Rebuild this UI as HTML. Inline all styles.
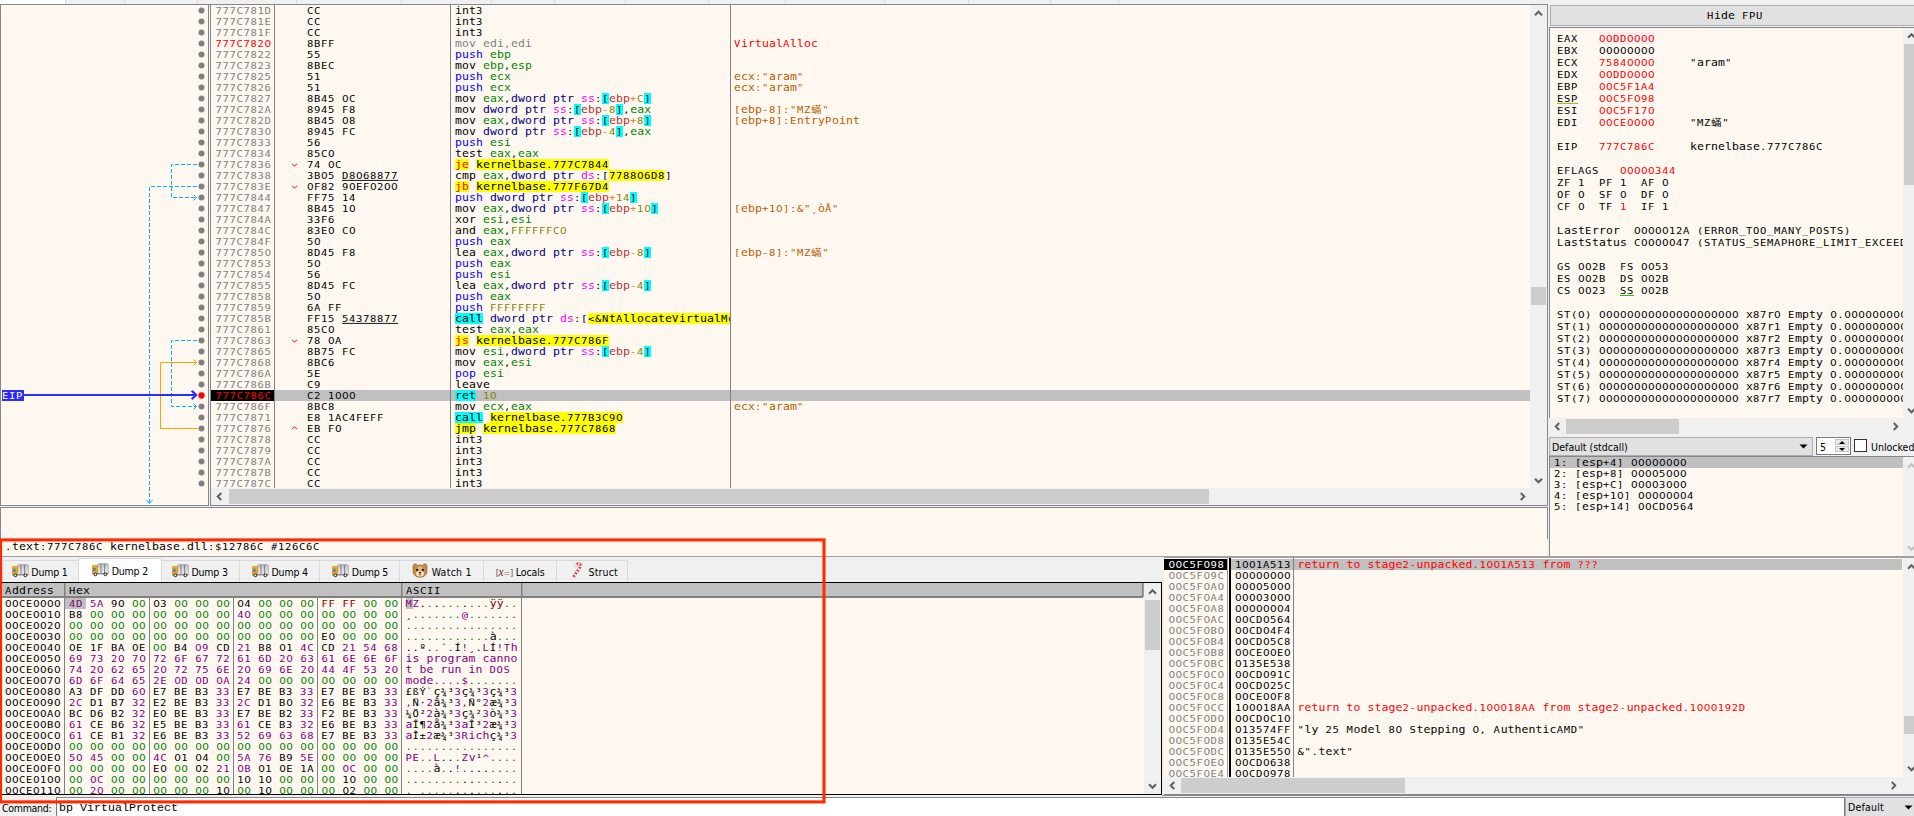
<!DOCTYPE html>
<html lang="en"><head><meta charset="utf-8"><title>x32dbg - stage2-unpacked</title>
<style>
*{box-sizing:border-box;margin:0;padding:0}
html,body{width:1914px;height:816px;overflow:hidden;background:#F0F0F0}
#root{position:relative;width:1914px;height:816px;overflow:hidden;background:#F0F0F0;font-family:"DejaVu Sans Condensed","Liberation Sans",sans-serif;font-size:10.5px;color:#000}
.a{position:absolute}
.m{font-family:"DejaVu Sans Mono","Noto Sans CJK TC",monospace;font-size:10.5px;letter-spacing:0.6785px;white-space:pre}
.r{position:absolute;height:11px;line-height:11px;white-space:pre}
.r i,.r12 i,.h11 i{font-style:normal;position:relative;top:-0.5px;display:inline-block;transform:scaleY(0.9);transform-origin:0 9.135px}
.r12 i{transform-origin:0 9.635px}
.h11{height:11px;line-height:11px}
.r b{font-weight:normal;display:inline-block;height:11px;vertical-align:top}
.r12{position:absolute;height:12px;line-height:12px;white-space:pre}
.view{position:absolute;background:#FFF8F0;overflow:hidden}
.gr{color:#808080}.rd{color:#FF0000}.bl{color:#0000FF}.rg{color:#008300}.nv{color:#000080}
.sg{color:#FF00FF}.mb{color:#B03434}.op{color:#F27711}.vl{color:#828200}
.cy{background:#00FFFF}.yl{background:#FFFF00}.cm{color:#B85C00}
.g0{color:#008000}.pp{color:#800080}.dr{color:#800000}
.u{text-decoration:underline;text-underline-offset:1px}
u{text-decoration:none;font-family:"DejaVu Sans",sans-serif;letter-spacing:0.3196px;line-height:0}
s{text-decoration:none;font-size:11.5px;letter-spacing:0.0764px;line-height:0}
.sb{position:absolute;background:#F0F0F0}
.th{position:absolute;background:#CDCDCD}
.ln{position:absolute;background:#828790}
.ut{font-family:"DejaVu Sans Condensed","Liberation Sans",sans-serif;font-size:10.5px;letter-spacing:0px;white-space:pre}
</style></head>
<body><div id="root">
<div class="a" style="left:0px;top:0px;width:1914px;height:4px;background:#F0F0F0;"></div>
<div class="a" style="left:0px;top:0px;width:65px;height:4px;background:#FFFFFF;"></div>
<div class="a" style="left:65px;top:0px;width:1px;height:4px;background:#D9D9D9;"></div>
<div class="a" style="left:124px;top:0px;width:1px;height:4px;background:#D9D9D9;"></div>
<div class="a" style="left:197px;top:0px;width:1px;height:4px;background:#D9D9D9;"></div>
<div class="a" style="left:296px;top:0px;width:1px;height:4px;background:#D9D9D9;"></div>
<div class="a" style="left:401px;top:0px;width:1px;height:4px;background:#D9D9D9;"></div>
<div class="a" style="left:491px;top:0px;width:1px;height:4px;background:#D9D9D9;"></div>
<div class="a" style="left:554px;top:0px;width:1px;height:4px;background:#D9D9D9;"></div>
<div class="a" style="left:625px;top:0px;width:1px;height:4px;background:#D9D9D9;"></div>
<div class="a" style="left:708px;top:0px;width:1px;height:4px;background:#D9D9D9;"></div>
<div class="a" style="left:785px;top:0px;width:1px;height:4px;background:#D9D9D9;"></div>
<div class="a" style="left:884px;top:0px;width:1px;height:4px;background:#D9D9D9;"></div>
<div class="a" style="left:968px;top:0px;width:1px;height:4px;background:#D9D9D9;"></div>
<div class="a" style="left:1050px;top:0px;width:1px;height:4px;background:#D9D9D9;"></div>
<div class="a" style="left:1118px;top:0px;width:1px;height:4px;background:#D9D9D9;"></div>
<div class="a" style="left:0px;top:4px;width:1548px;height:1px;background:#828790;"></div>
<div class="view" style="left:0;top:5px;width:209px;height:501px;border-left:1px solid #828790;border-right:1px solid #828790;border-bottom:1px solid #828790"></div>
<div class="view" style="left:210px;top:5px;width:1338px;height:501px;border-left:1px solid #828790;border-right:1px solid #828790;border-bottom:1px solid #828790"></div>
<div class="a" style="left:275px;top:390px;width:1255px;height:11px;background:#C0C0C0;"></div>
<div class="a" style="left:211px;top:390px;width:63px;height:11px;background:#000000;"></div>
<div class="a m" style="left:211px;top:5px;width:63px;height:484px;overflow:hidden"><div class="r gr" style="left:4.5px;top:0px"><i>777C781D</i></div><div class="r gr" style="left:4.5px;top:11px"><i>777C781E</i></div><div class="r gr" style="left:4.5px;top:22px"><i>777C781F</i></div><div class="r rd" style="left:4.5px;top:33px"><i>777C782<u>0</u></i></div><div class="r gr" style="left:4.5px;top:44px"><i>777C7822</i></div><div class="r gr" style="left:4.5px;top:55px"><i>777C7823</i></div><div class="r gr" style="left:4.5px;top:66px"><i>777C7825</i></div><div class="r gr" style="left:4.5px;top:77px"><i>777C7826</i></div><div class="r gr" style="left:4.5px;top:88px"><i>777C7827</i></div><div class="r gr" style="left:4.5px;top:99px"><i>777C782A</i></div><div class="r gr" style="left:4.5px;top:110px"><i>777C782D</i></div><div class="r gr" style="left:4.5px;top:121px"><i>777C783<u>0</u></i></div><div class="r gr" style="left:4.5px;top:132px"><i>777C7833</i></div><div class="r gr" style="left:4.5px;top:143px"><i>777C7834</i></div><div class="r gr" style="left:4.5px;top:154px"><i>777C7836</i></div><div class="r gr" style="left:4.5px;top:165px"><i>777C7838</i></div><div class="r gr" style="left:4.5px;top:176px"><i>777C783E</i></div><div class="r gr" style="left:4.5px;top:187px"><i>777C7844</i></div><div class="r gr" style="left:4.5px;top:198px"><i>777C7847</i></div><div class="r gr" style="left:4.5px;top:209px"><i>777C784A</i></div><div class="r gr" style="left:4.5px;top:220px"><i>777C784C</i></div><div class="r gr" style="left:4.5px;top:231px"><i>777C784F</i></div><div class="r gr" style="left:4.5px;top:242px"><i>777C785<u>0</u></i></div><div class="r gr" style="left:4.5px;top:253px"><i>777C7853</i></div><div class="r gr" style="left:4.5px;top:264px"><i>777C7854</i></div><div class="r gr" style="left:4.5px;top:275px"><i>777C7855</i></div><div class="r gr" style="left:4.5px;top:286px"><i>777C7858</i></div><div class="r gr" style="left:4.5px;top:297px"><i>777C7859</i></div><div class="r gr" style="left:4.5px;top:308px"><i>777C785B</i></div><div class="r gr" style="left:4.5px;top:319px"><i>777C7861</i></div><div class="r gr" style="left:4.5px;top:330px"><i>777C7863</i></div><div class="r gr" style="left:4.5px;top:341px"><i>777C7865</i></div><div class="r gr" style="left:4.5px;top:352px"><i>777C7868</i></div><div class="r gr" style="left:4.5px;top:363px"><i>777C786A</i></div><div class="r gr" style="left:4.5px;top:374px"><i>777C786B</i></div><div class="r rd" style="left:4.5px;top:385px"><i>777C786C</i></div><div class="r gr" style="left:4.5px;top:396px"><i>777C786F</i></div><div class="r gr" style="left:4.5px;top:407px"><i>777C7871</i></div><div class="r gr" style="left:4.5px;top:418px"><i>777C7876</i></div><div class="r gr" style="left:4.5px;top:429px"><i>777C7878</i></div><div class="r gr" style="left:4.5px;top:440px"><i>777C7879</i></div><div class="r gr" style="left:4.5px;top:451px"><i>777C787A</i></div><div class="r gr" style="left:4.5px;top:462px"><i>777C787B</i></div><div class="r gr" style="left:4.5px;top:473px"><i>777C787C</i></div></div>
<div class="a m" style="left:275px;top:5px;width:175px;height:484px;overflow:hidden"><div class="r" style="left:32px;top:0px"><i>CC</i></div><div class="r" style="left:32px;top:11px"><i>CC</i></div><div class="r" style="left:32px;top:22px"><i>CC</i></div><div class="r" style="left:32px;top:33px"><i>8BFF</i></div><div class="r" style="left:32px;top:44px"><i>55</i></div><div class="r" style="left:32px;top:55px"><i>8BEC</i></div><div class="r" style="left:32px;top:66px"><i>51</i></div><div class="r" style="left:32px;top:77px"><i>51</i></div><div class="r" style="left:32px;top:88px"><i>8B45 <u>0</u>C</i></div><div class="r" style="left:32px;top:99px"><i>8945 F8</i></div><div class="r" style="left:32px;top:110px"><i>8B45 <u>0</u>8</i></div><div class="r" style="left:32px;top:121px"><i>8945 FC</i></div><div class="r" style="left:32px;top:132px"><i>56</i></div><div class="r" style="left:32px;top:143px"><i>85C<u>0</u></i></div><div class="r" style="left:32px;top:154px"><i>74 <u>0</u>C</i></div><div class="r" style="left:32px;top:165px"><i>3B<u>0</u>5 <span class="u">D8<u>0</u>68877</span></i></div><div class="r" style="left:32px;top:176px"><i><u>0</u>F82 9<u>0</u>EF<u>0</u>2<u>00</u></i></div><div class="r" style="left:32px;top:187px"><i>FF75 14</i></div><div class="r" style="left:32px;top:198px"><i>8B45 1<u>0</u></i></div><div class="r" style="left:32px;top:209px"><i>33F6</i></div><div class="r" style="left:32px;top:220px"><i>83E<u>0</u> C<u>0</u></i></div><div class="r" style="left:32px;top:231px"><i>5<u>0</u></i></div><div class="r" style="left:32px;top:242px"><i>8D45 F8</i></div><div class="r" style="left:32px;top:253px"><i>5<u>0</u></i></div><div class="r" style="left:32px;top:264px"><i>56</i></div><div class="r" style="left:32px;top:275px"><i>8D45 FC</i></div><div class="r" style="left:32px;top:286px"><i>5<u>0</u></i></div><div class="r" style="left:32px;top:297px"><i>6A FF</i></div><div class="r" style="left:32px;top:308px"><i>FF15 <span class="u">54378877</span></i></div><div class="r" style="left:32px;top:319px"><i>85C<u>0</u></i></div><div class="r" style="left:32px;top:330px"><i>78 <u>0</u>A</i></div><div class="r" style="left:32px;top:341px"><i>8B75 FC</i></div><div class="r" style="left:32px;top:352px"><i>8BC6</i></div><div class="r" style="left:32px;top:363px"><i>5E</i></div><div class="r" style="left:32px;top:374px"><i>C9</i></div><div class="r" style="left:32px;top:385px"><i>C2 1<u>000</u></i></div><div class="r" style="left:32px;top:396px"><i>8BC8</i></div><div class="r" style="left:32px;top:407px"><i>E8 1AC4FEFF</i></div><div class="r" style="left:32px;top:418px"><i>EB F<u>0</u></i></div><div class="r" style="left:32px;top:429px"><i>CC</i></div><div class="r" style="left:32px;top:440px"><i>CC</i></div><div class="r" style="left:32px;top:451px"><i>CC</i></div><div class="r" style="left:32px;top:462px"><i>CC</i></div><div class="r" style="left:32px;top:473px"><i>CC</i></div></div>
<div class="a m" style="left:451px;top:5px;width:279px;height:484px;overflow:hidden"><div class="r" style="left:4px;top:0px"><i><s>int</s>3</i></div><div class="r" style="left:4px;top:11px"><i><s>int</s>3</i></div><div class="r" style="left:4px;top:22px"><i><s>int</s>3</i></div><div class="r" style="left:4px;top:33px"><i><span class="gr"><s>mov</s> <s>edi</s>,<s>edi</s></span></i></div><div class="r" style="left:4px;top:44px"><i><span class="bl"><s>push</s></span> <span class="rg"><s>ebp</s></span></i></div><div class="r" style="left:4px;top:55px"><i><s>mov</s> <span class="rg"><s>ebp</s></span>,<span class="rg"><s>esp</s></span></i></div><div class="r" style="left:4px;top:66px"><i><span class="bl"><s>push</s></span> <span class="rg"><s>ecx</s></span></i></div><div class="r" style="left:4px;top:77px"><i><span class="bl"><s>push</s></span> <span class="rg"><s>ecx</s></span></i></div><div class="a" style="left:151px;top:88px;width:7px;height:11px;background:#00FFFF"></div><div class="a" style="left:193px;top:88px;width:7px;height:11px;background:#00FFFF"></div><div class="r" style="left:4px;top:88px"><i><s>mov</s> <span class="rg"><s>eax</s></span>,<span class="nv"><s>dword</s> <s>ptr</s></span> <span class="sg"><s>ss</s></span>:<span>[</span><span class="mb"><s>ebp</s></span><span class="op">+</span><span class="vl">C</span><span>]</span></i></div><div class="a" style="left:123px;top:99px;width:7px;height:11px;background:#00FFFF"></div><div class="a" style="left:165px;top:99px;width:7px;height:11px;background:#00FFFF"></div><div class="r" style="left:4px;top:99px"><i><s>mov</s> <span class="nv"><s>dword</s> <s>ptr</s></span> <span class="sg"><s>ss</s></span>:<span>[</span><span class="mb"><s>ebp</s></span><span class="op">-</span><span class="vl">8</span><span>]</span>,<span class="rg"><s>eax</s></span></i></div><div class="a" style="left:151px;top:110px;width:7px;height:11px;background:#00FFFF"></div><div class="a" style="left:193px;top:110px;width:7px;height:11px;background:#00FFFF"></div><div class="r" style="left:4px;top:110px"><i><s>mov</s> <span class="rg"><s>eax</s></span>,<span class="nv"><s>dword</s> <s>ptr</s></span> <span class="sg"><s>ss</s></span>:<span>[</span><span class="mb"><s>ebp</s></span><span class="op">+</span><span class="vl">8</span><span>]</span></i></div><div class="a" style="left:123px;top:121px;width:7px;height:11px;background:#00FFFF"></div><div class="a" style="left:165px;top:121px;width:7px;height:11px;background:#00FFFF"></div><div class="r" style="left:4px;top:121px"><i><s>mov</s> <span class="nv"><s>dword</s> <s>ptr</s></span> <span class="sg"><s>ss</s></span>:<span>[</span><span class="mb"><s>ebp</s></span><span class="op">-</span><span class="vl">4</span><span>]</span>,<span class="rg"><s>eax</s></span></i></div><div class="r" style="left:4px;top:132px"><i><span class="bl"><s>push</s></span> <span class="rg"><s>esi</s></span></i></div><div class="r" style="left:4px;top:143px"><i><s>test</s> <span class="rg"><s>eax</s></span>,<span class="rg"><s>eax</s></span></i></div><div class="a" style="left:4px;top:154px;width:14px;height:11px;background:#FFFF00"></div><div class="a" style="left:25px;top:154px;width:133px;height:11px;background:#FFFF00"></div><div class="r" style="left:4px;top:154px"><i><span class="rd"><s>je</s></span> <span><s>kernelbase</s>.777C7844</span></i></div><div class="a" style="left:158px;top:165px;width:56px;height:11px;background:#FFFF00"></div><div class="r" style="left:4px;top:165px"><i><s>cmp</s> <span class="rg"><s>eax</s></span>,<span class="nv"><s>dword</s> <s>ptr</s></span> <span class="sg"><s>ds</s></span>:[<span>7788<u>0</u>6D8</span>]</i></div><div class="a" style="left:4px;top:176px;width:14px;height:11px;background:#FFFF00"></div><div class="a" style="left:25px;top:176px;width:133px;height:11px;background:#FFFF00"></div><div class="r" style="left:4px;top:176px"><i><span class="rd"><s>jb</s></span> <span><s>kernelbase</s>.777F67D4</span></i></div><div class="a" style="left:130px;top:187px;width:7px;height:11px;background:#00FFFF"></div><div class="a" style="left:179px;top:187px;width:7px;height:11px;background:#00FFFF"></div><div class="r" style="left:4px;top:187px"><i><span class="bl"><s>push</s></span> <span class="nv"><s>dword</s> <s>ptr</s></span> <span class="sg"><s>ss</s></span>:<span>[</span><span class="mb"><s>ebp</s></span><span class="op">+</span><span class="vl">14</span><span>]</span></i></div><div class="a" style="left:151px;top:198px;width:7px;height:11px;background:#00FFFF"></div><div class="a" style="left:200px;top:198px;width:7px;height:11px;background:#00FFFF"></div><div class="r" style="left:4px;top:198px"><i><s>mov</s> <span class="rg"><s>eax</s></span>,<span class="nv"><s>dword</s> <s>ptr</s></span> <span class="sg"><s>ss</s></span>:<span>[</span><span class="mb"><s>ebp</s></span><span class="op">+</span><span class="vl">1<u>0</u></span><span>]</span></i></div><div class="r" style="left:4px;top:209px"><i><s>xor</s> <span class="rg"><s>esi</s></span>,<span class="rg"><s>esi</s></span></i></div><div class="r" style="left:4px;top:220px"><i><s>and</s> <span class="rg"><s>eax</s></span>,<span class="vl">FFFFFFC<u>0</u></span></i></div><div class="r" style="left:4px;top:231px"><i><span class="bl"><s>push</s></span> <span class="rg"><s>eax</s></span></i></div><div class="a" style="left:151px;top:242px;width:7px;height:11px;background:#00FFFF"></div><div class="a" style="left:193px;top:242px;width:7px;height:11px;background:#00FFFF"></div><div class="r" style="left:4px;top:242px"><i><s>lea</s> <span class="rg"><s>eax</s></span>,<span class="nv"><s>dword</s> <s>ptr</s></span> <span class="sg"><s>ss</s></span>:<span>[</span><span class="mb"><s>ebp</s></span><span class="op">-</span><span class="vl">8</span><span>]</span></i></div><div class="r" style="left:4px;top:253px"><i><span class="bl"><s>push</s></span> <span class="rg"><s>eax</s></span></i></div><div class="r" style="left:4px;top:264px"><i><span class="bl"><s>push</s></span> <span class="rg"><s>esi</s></span></i></div><div class="a" style="left:151px;top:275px;width:7px;height:11px;background:#00FFFF"></div><div class="a" style="left:193px;top:275px;width:7px;height:11px;background:#00FFFF"></div><div class="r" style="left:4px;top:275px"><i><s>lea</s> <span class="rg"><s>eax</s></span>,<span class="nv"><s>dword</s> <s>ptr</s></span> <span class="sg"><s>ss</s></span>:<span>[</span><span class="mb"><s>ebp</s></span><span class="op">-</span><span class="vl">4</span><span>]</span></i></div><div class="r" style="left:4px;top:286px"><i><span class="bl"><s>push</s></span> <span class="rg"><s>eax</s></span></i></div><div class="r" style="left:4px;top:297px"><i><span class="bl"><s>push</s></span> <span class="vl">FFFFFFFF</span></i></div><div class="a" style="left:4px;top:308px;width:28px;height:11px;background:#00FFFF"></div><div class="a" style="left:137px;top:308px;width:182px;height:11px;background:#FFFF00"></div><div class="r" style="left:4px;top:308px"><i><span><s>call</s></span> <span class="nv"><s>dword</s> <s>ptr</s></span> <span class="sg"><s>ds</s></span>:[<span>&lt;&amp;N<s>t</s>A<s>llocate</s>V<s>irtual</s>M<s>emory</s>&gt;</span>]</i></div><div class="r" style="left:4px;top:319px"><i><s>test</s> <span class="rg"><s>eax</s></span>,<span class="rg"><s>eax</s></span></i></div><div class="a" style="left:4px;top:330px;width:14px;height:11px;background:#FFFF00"></div><div class="a" style="left:25px;top:330px;width:133px;height:11px;background:#FFFF00"></div><div class="r" style="left:4px;top:330px"><i><span class="rd"><s>js</s></span> <span><s>kernelbase</s>.777C786F</span></i></div><div class="a" style="left:151px;top:341px;width:7px;height:11px;background:#00FFFF"></div><div class="a" style="left:193px;top:341px;width:7px;height:11px;background:#00FFFF"></div><div class="r" style="left:4px;top:341px"><i><s>mov</s> <span class="rg"><s>esi</s></span>,<span class="nv"><s>dword</s> <s>ptr</s></span> <span class="sg"><s>ss</s></span>:<span>[</span><span class="mb"><s>ebp</s></span><span class="op">-</span><span class="vl">4</span><span>]</span></i></div><div class="r" style="left:4px;top:352px"><i><s>mov</s> <span class="rg"><s>eax</s></span>,<span class="rg"><s>esi</s></span></i></div><div class="r" style="left:4px;top:363px"><i><span class="bl"><s>pop</s></span> <span class="rg"><s>esi</s></span></i></div><div class="r" style="left:4px;top:374px"><i><s>leave</s></i></div><div class="a" style="left:4px;top:385px;width:21px;height:11px;background:#00FFFF"></div><div class="r" style="left:4px;top:385px"><i><span><s>ret</s></span> <span class="vl">1<u>0</u></span></i></div><div class="r" style="left:4px;top:396px"><i><s>mov</s> <span class="rg"><s>ecx</s></span>,<span class="rg"><s>eax</s></span></i></div><div class="a" style="left:4px;top:407px;width:28px;height:11px;background:#00FFFF"></div><div class="a" style="left:39px;top:407px;width:133px;height:11px;background:#FFFF00"></div><div class="r" style="left:4px;top:407px"><i><span><s>call</s></span> <span><s>kernelbase</s>.777B3C9<u>0</u></span></i></div><div class="a" style="left:4px;top:418px;width:21px;height:11px;background:#FFFF00"></div><div class="a" style="left:32px;top:418px;width:133px;height:11px;background:#FFFF00"></div><div class="r" style="left:4px;top:418px"><i><span><s>jmp</s></span> <span><s>kernelbase</s>.777C7868</span></i></div><div class="r" style="left:4px;top:429px"><i><s>int</s>3</i></div><div class="r" style="left:4px;top:440px"><i><s>int</s>3</i></div><div class="r" style="left:4px;top:451px"><i><s>int</s>3</i></div><div class="r" style="left:4px;top:462px"><i><s>int</s>3</i></div><div class="r" style="left:4px;top:473px"><i><s>int</s>3</i></div></div>
<div class="a m" style="left:731px;top:5px;width:799px;height:484px;overflow:hidden"><div class="r rd" style="left:3px;top:33px"><i>V<s>irtual</s>A<s>lloc</s></i></div><div class="r cm" style="left:3px;top:66px"><i><s>ecx</s>:&quot;<s>aram</s>&quot;</i></div><div class="r cm" style="left:3px;top:77px"><i><s>ecx</s>:&quot;<s>aram</s>&quot;</i></div><div class="r cm" style="left:3px;top:99px"><i>[<s>ebp</s>-8]:&quot;MZ蟎&quot;</i></div><div class="r cm" style="left:3px;top:110px"><i>[<s>ebp</s>+8]:E<s>ntry</s>P<s>oint</s></i></div><div class="r cm" style="left:3px;top:198px"><i>[<s>ebp</s>+1<u>0</u>]:&amp;&quot;¸<s>ò</s>Å&quot;</i></div><div class="r cm" style="left:3px;top:242px"><i>[<s>ebp</s>-8]:&quot;MZ蟎&quot;</i></div><div class="r cm" style="left:3px;top:396px"><i><s>ecx</s>:&quot;<s>aram</s>&quot;</i></div></div>
<div class="a" style="left:274px;top:5px;width:1px;height:484px;background:#808080;"></div>
<div class="a" style="left:450px;top:5px;width:1px;height:484px;background:#808080;"></div>
<div class="a" style="left:730px;top:5px;width:1px;height:484px;background:#808080;"></div>
<div class="a m h11" style="left:2px;top:390px;width:22px;background:#2B2BFF;color:#FFFFFF"><i>EIP</i></div>
<div class="a" style="left:1530px;top:5px;width:17px;height:484px;background:#F0F0F0;"></div>
<div class="a" style="left:1531px;top:287px;width:15px;height:18px;background:#CDCDCD;"></div>
<div class="a" style="left:211px;top:488px;width:1336px;height:17px;background:#F0F0F0;"></div>
<div class="a" style="left:229px;top:489px;width:980px;height:15px;background:#CDCDCD;"></div>
<div class="a m" style="left:1550px;top:5px;width:370px;height:21px;background:#E1E1E1;border:1px solid #ADADAD;line-height:19px;text-align:center"><i style="font-style:normal;display:inline-block;transform:scaleY(0.9);transform-origin:0 70%">H<s>ide</s> FPU</i></div>
<div class="view" style="left:1549px;top:27px;width:366px;height:391px;border-left:1px solid #828790;border-top:1px solid #828790"></div>
<div class="a m" style="left:1557px;top:32px;width:346px;height:386px;overflow:hidden"><div class="a" style="left:42px;top:0;width:56px;height:12px;background:#EEEEEE"></div><div class="r12 " style="left:0px;top:0px;"><i>EAX</i></div><div class="r12 rd" style="left:42px;top:0px;"><i><u>00</u>DD<u>0000</u></i></div><div class="r12 " style="left:0px;top:12px;"><i>EBX</i></div><div class="r12 " style="left:42px;top:12px;"><i><u>00000000</u></i></div><div class="r12 " style="left:0px;top:24px;"><i>ECX</i></div><div class="r12 rd" style="left:42px;top:24px;"><i>7584<u>0000</u></i></div><div class="r12 " style="left:133px;top:24px;"><i>&quot;<s>aram</s>&quot;</i></div><div class="r12 " style="left:0px;top:36px;"><i>EDX</i></div><div class="r12 rd" style="left:42px;top:36px;"><i><u>00</u>DD<u>0000</u></i></div><div class="r12 " style="left:0px;top:48px;"><i>EBP</i></div><div class="r12 rd" style="left:42px;top:48px;"><i><u>00</u>C5F1A4</i></div><div class="r12 " style="left:0px;top:60px;"><i><span style="border-bottom:1px solid #9A9A00;display:inline-block;height:11px;line-height:11px">ESP</span></i></div><div class="r12 rd" style="left:42px;top:60px;"><i><u>00</u>C5F<u>0</u>98</i></div><div class="r12 " style="left:0px;top:72px;"><i>ESI</i></div><div class="r12 rd" style="left:42px;top:72px;"><i><u>00</u>C5F17<u>0</u></i></div><div class="r12 " style="left:0px;top:84px;"><i>EDI</i></div><div class="r12 rd" style="left:42px;top:84px;"><i><u>00</u>CE<u>0000</u></i></div><div class="r12 " style="left:133px;top:84px;"><i>&quot;MZ蟎&quot;</i></div><div class="r12 " style="left:0px;top:108px;"><i>EIP</i></div><div class="r12 rd" style="left:42px;top:108px;"><i>777C786C</i></div><div class="r12 " style="left:133px;top:108px;"><i><s>kernelbase</s>.777C786C</i></div><div class="r12 " style="left:0px;top:132px;"><i>EFLAGS</i></div><div class="r12 rd" style="left:63px;top:132px;"><i><u>00000</u>344</i></div><div class="r12 " style="left:0px;top:144px;"><i>ZF 1  PF 1  AF <u>0</u></i></div><div class="r12 " style="left:0px;top:156px;"><i>OF <u>0</u>  SF <u>0</u>  DF <u>0</u></i></div><div class="r12 " style="left:0px;top:168px;"><i>CF <u>0</u>  TF <span class="rd">1</span>  IF 1</i></div><div class="r12 " style="left:0px;top:192px;"><i>L<s>ast</s>E<s>rror</s>  <u>00000</u>12A (ERROR_TOO_MANY_POSTS)</i></div><div class="r12 " style="left:0px;top:204px;"><i>L<s>ast</s>S<s>tatus</s> C<u>00000</u>47 (STATUS_SEMAPHORE_LIMIT_EXCEEDED)</i></div><div class="r12 " style="left:0px;top:228px;"><i>GS <u>00</u>2B  FS <u>00</u>53</i></div><div class="r12 " style="left:0px;top:240px;"><i>ES <u>00</u>2B  DS <u>00</u>2B</i></div><div class="r12 " style="left:0px;top:252px;"><i>CS <u>00</u>23  <span style="border-bottom:1px solid #00A000;display:inline-block;height:11px;line-height:11px">SS</span> <u>00</u>2B</i></div><div class="r12 " style="left:0px;top:276px;"><i>ST(<u>0</u>) <u>00000000000000000000</u> <s>x</s>87<s>r</s><u>0</u> E<s>mpty</s> <u>0</u>.<u>000000000000000000</u></i></div><div class="r12 " style="left:0px;top:288px;"><i>ST(1) <u>00000000000000000000</u> <s>x</s>87<s>r</s>1 E<s>mpty</s> <u>0</u>.<u>000000000000000000</u></i></div><div class="r12 " style="left:0px;top:300px;"><i>ST(2) <u>00000000000000000000</u> <s>x</s>87<s>r</s>2 E<s>mpty</s> <u>0</u>.<u>000000000000000000</u></i></div><div class="r12 " style="left:0px;top:312px;"><i>ST(3) <u>00000000000000000000</u> <s>x</s>87<s>r</s>3 E<s>mpty</s> <u>0</u>.<u>000000000000000000</u></i></div><div class="r12 " style="left:0px;top:324px;"><i>ST(4) <u>00000000000000000000</u> <s>x</s>87<s>r</s>4 E<s>mpty</s> <u>0</u>.<u>000000000000000000</u></i></div><div class="r12 " style="left:0px;top:336px;"><i>ST(5) <u>00000000000000000000</u> <s>x</s>87<s>r</s>5 E<s>mpty</s> <u>0</u>.<u>000000000000000000</u></i></div><div class="r12 " style="left:0px;top:348px;"><i>ST(6) <u>00000000000000000000</u> <s>x</s>87<s>r</s>6 E<s>mpty</s> <u>0</u>.<u>000000000000000000</u></i></div><div class="r12 " style="left:0px;top:360px;"><i>ST(7) <u>00000000000000000000</u> <s>x</s>87<s>r</s>7 E<s>mpty</s> <u>0</u>.<u>000000000000000000</u></i></div></div>
<div class="a" style="left:1903px;top:28px;width:11px;height:390px;background:#F0F0F0;"></div>
<div class="a" style="left:1904px;top:44px;width:10px;height:141px;background:#CDCDCD;"></div>
<div class="a" style="left:1550px;top:418px;width:364px;height:17px;background:#F0F0F0;"></div>
<div class="a" style="left:1566px;top:419px;width:113px;height:15px;background:#CDCDCD;"></div>
<div class="a" style="left:1549px;top:437px;width:264px;height:19px;background:#E1E1E1;border:1px solid #ADADAD;line-height:17px;padding-left:2px;font-size:10.5px"><span class="ut uq" style="position:relative;top:0.9px">Default (stdcall)</span></div>
<div class="a" style="left:1816px;top:437px;width:35px;height:18px;background:#FFFFFF;border:1px solid #7A7A7A;line-height:16px;padding-left:3px;font-size:10.5px"><span class="ut uq" style="position:relative;top:0.9px">5</span></div>
<div class="a" style="left:1835px;top:439px;width:14px;height:6px;background:#E9E9E9;border:1px solid #C4C4C4"></div>
<div class="a" style="left:1835px;top:446px;width:14px;height:6px;background:#E9E9E9;border:1px solid #C4C4C4"></div>
<div class="a" style="left:1854px;top:439px;width:13px;height:13px;background:#FFFFFF;border:1px solid #333333"></div>
<div class="a" style="left:1871px;top:440px;line-height:13px;font-size:10.5px;white-space:pre"><span class="ut uq" style="position:relative;top:0.8px">Unlocked</span></div>
<div class="view" style="left:1549px;top:456px;width:366px;height:101px;border-left:1px solid #828790;border-top:1px solid #828790;border-bottom:1px solid #828790"></div>
<div class="a" style="left:1550px;top:457px;width:1353px;height:11px;background:#C0C0C0;"></div>
<div class="a m" style="left:1554px;top:457px;width:340px;height:90px;overflow:hidden"><div class="r" style="left:0;top:0px"><i>1: [<s>esp</s>+4] <u>00000000</u></i></div><div class="r" style="left:0;top:11px"><i>2: [<s>esp</s>+8] <u>0000</u>5<u>000</u></i></div><div class="r" style="left:0;top:22px"><i>3: [<s>esp</s>+C] <u>0000</u>3<u>000</u></i></div><div class="r" style="left:0;top:33px"><i>4: [<s>esp</s>+1<u>0</u>] <u>0000000</u>4</i></div><div class="r" style="left:0;top:44px"><i>5: [<s>esp</s>+14] <u>00</u>CD<u>0</u>564</i></div></div>
<div class="a" style="left:1903px;top:457px;width:11px;height:99px;background:#F0F0F0;"></div>
<div class="view" style="left:0;top:507px;width:1548px;height:32px;border-left:1px solid #828790;border-top:1px solid #828790;border-right:1px solid #828790"></div>
<div class="a" style="left:1px;top:539px;width:1546px;height:18px;background:#FFF8F0;"></div>
<div class="a m h11" style="left:5px;top:541px"><i>.<s>text</s>:777C786C <s>kernelbase</s>.<s>dll</s>:$12786C #126C6C</i></div>
<div class="a" style="left:1548px;top:5px;width:1px;height:552px;background:#F0F0F0;"></div>
<div class="a" style="left:0px;top:556px;width:1914px;height:1px;background:#A0A0A0;"></div>
<div class="a" style="left:2px;top:557px;width:1160px;height:26px;background:#F0F0F0;"></div>
<div class="a" style="left:2px;top:560.2px;width:77px;height:21.799999999999955px;background:#F0F0F0;border:1px solid #D9D9D9;border-bottom:none"></div>
<svg class="a" style="left:11.6px;top:563.6px" width="17" height="14" viewBox="0 0 17 14"><defs><linearGradient id="tg" x1="0" y1="0" x2="0" y2="1"><stop offset="0" stop-color="#B4B4B4"/><stop offset="0.45" stop-color="#D6D8E2"/><stop offset="1" stop-color="#ECECEC"/></linearGradient></defs><path d="M5.5 2.2 Q5.5 0.5 7.2 0.5 L14.6 0.5 Q16.3 0.5 16.3 2.2 L16.3 10.5 L5.5 10.5 Z" fill="url(#tg)" stroke="#A9A9A9" stroke-width="0.8"/><line x1="9" y1="1" x2="9" y2="10" stroke="#77777F" stroke-width="0.9"/><line x1="12.6" y1="1" x2="12.6" y2="10" stroke="#77777F" stroke-width="0.9"/><rect x="0.4" y="2.4" width="5" height="8.3" rx="0.8" fill="#F5B400" stroke="#C98A00" stroke-width="0.7"/><rect x="1" y="4.6" width="2.6" height="3.4" fill="#4B7FD0"/><rect x="0.4" y="10" width="16" height="1.4" fill="#8A8A8A"/><circle cx="3.4" cy="11.3" r="1.45" fill="#E8E8E8" stroke="#2A1A1A" stroke-width="1.0"/><circle cx="13.4" cy="11.3" r="1.45" fill="#E8E8E8" stroke="#2A1A1A" stroke-width="1.0"/></svg>
<div class="a ut" style="left:31.3px;top:566.3px;height:13px;line-height:13px;letter-spacing:-0.18px">Dump 1</div>
<div class="a" style="left:78px;top:557.7px;width:84px;height:24.299999999999955px;background:#FFFFFF;border:1px solid #D9D9D9;border-bottom:none"></div>
<svg class="a" style="left:91.7px;top:562.6px" width="17" height="14" viewBox="0 0 17 14"><defs><linearGradient id="tg" x1="0" y1="0" x2="0" y2="1"><stop offset="0" stop-color="#B4B4B4"/><stop offset="0.45" stop-color="#D6D8E2"/><stop offset="1" stop-color="#ECECEC"/></linearGradient></defs><path d="M5.5 2.2 Q5.5 0.5 7.2 0.5 L14.6 0.5 Q16.3 0.5 16.3 2.2 L16.3 10.5 L5.5 10.5 Z" fill="url(#tg)" stroke="#A9A9A9" stroke-width="0.8"/><line x1="9" y1="1" x2="9" y2="10" stroke="#77777F" stroke-width="0.9"/><line x1="12.6" y1="1" x2="12.6" y2="10" stroke="#77777F" stroke-width="0.9"/><rect x="0.4" y="2.4" width="5" height="8.3" rx="0.8" fill="#F5B400" stroke="#C98A00" stroke-width="0.7"/><rect x="1" y="4.6" width="2.6" height="3.4" fill="#4B7FD0"/><rect x="0.4" y="10" width="16" height="1.4" fill="#8A8A8A"/><circle cx="3.4" cy="11.3" r="1.45" fill="#E8E8E8" stroke="#2A1A1A" stroke-width="1.0"/><circle cx="13.4" cy="11.3" r="1.45" fill="#E8E8E8" stroke="#2A1A1A" stroke-width="1.0"/></svg>
<div class="a ut" style="left:111.7px;top:565.3px;height:13px;line-height:13px;letter-spacing:-0.18px">Dump 2</div>
<div class="a" style="left:161px;top:560.2px;width:79px;height:21.799999999999955px;background:#F0F0F0;border:1px solid #D9D9D9;border-bottom:none"></div>
<svg class="a" style="left:171.9px;top:563.6px" width="17" height="14" viewBox="0 0 17 14"><defs><linearGradient id="tg" x1="0" y1="0" x2="0" y2="1"><stop offset="0" stop-color="#B4B4B4"/><stop offset="0.45" stop-color="#D6D8E2"/><stop offset="1" stop-color="#ECECEC"/></linearGradient></defs><path d="M5.5 2.2 Q5.5 0.5 7.2 0.5 L14.6 0.5 Q16.3 0.5 16.3 2.2 L16.3 10.5 L5.5 10.5 Z" fill="url(#tg)" stroke="#A9A9A9" stroke-width="0.8"/><line x1="9" y1="1" x2="9" y2="10" stroke="#77777F" stroke-width="0.9"/><line x1="12.6" y1="1" x2="12.6" y2="10" stroke="#77777F" stroke-width="0.9"/><rect x="0.4" y="2.4" width="5" height="8.3" rx="0.8" fill="#F5B400" stroke="#C98A00" stroke-width="0.7"/><rect x="1" y="4.6" width="2.6" height="3.4" fill="#4B7FD0"/><rect x="0.4" y="10" width="16" height="1.4" fill="#8A8A8A"/><circle cx="3.4" cy="11.3" r="1.45" fill="#E8E8E8" stroke="#2A1A1A" stroke-width="1.0"/><circle cx="13.4" cy="11.3" r="1.45" fill="#E8E8E8" stroke="#2A1A1A" stroke-width="1.0"/></svg>
<div class="a ut" style="left:191.4px;top:566.3px;height:13px;line-height:13px;letter-spacing:-0.18px">Dump 3</div>
<div class="a" style="left:239px;top:560.2px;width:81px;height:21.799999999999955px;background:#F0F0F0;border:1px solid #D9D9D9;border-bottom:none"></div>
<svg class="a" style="left:252px;top:563.6px" width="17" height="14" viewBox="0 0 17 14"><defs><linearGradient id="tg" x1="0" y1="0" x2="0" y2="1"><stop offset="0" stop-color="#B4B4B4"/><stop offset="0.45" stop-color="#D6D8E2"/><stop offset="1" stop-color="#ECECEC"/></linearGradient></defs><path d="M5.5 2.2 Q5.5 0.5 7.2 0.5 L14.6 0.5 Q16.3 0.5 16.3 2.2 L16.3 10.5 L5.5 10.5 Z" fill="url(#tg)" stroke="#A9A9A9" stroke-width="0.8"/><line x1="9" y1="1" x2="9" y2="10" stroke="#77777F" stroke-width="0.9"/><line x1="12.6" y1="1" x2="12.6" y2="10" stroke="#77777F" stroke-width="0.9"/><rect x="0.4" y="2.4" width="5" height="8.3" rx="0.8" fill="#F5B400" stroke="#C98A00" stroke-width="0.7"/><rect x="1" y="4.6" width="2.6" height="3.4" fill="#4B7FD0"/><rect x="0.4" y="10" width="16" height="1.4" fill="#8A8A8A"/><circle cx="3.4" cy="11.3" r="1.45" fill="#E8E8E8" stroke="#2A1A1A" stroke-width="1.0"/><circle cx="13.4" cy="11.3" r="1.45" fill="#E8E8E8" stroke="#2A1A1A" stroke-width="1.0"/></svg>
<div class="a ut" style="left:271.5px;top:566.3px;height:13px;line-height:13px;letter-spacing:-0.18px">Dump 4</div>
<div class="a" style="left:319px;top:560.2px;width:81px;height:21.799999999999955px;background:#F0F0F0;border:1px solid #D9D9D9;border-bottom:none"></div>
<svg class="a" style="left:332.2px;top:563.6px" width="17" height="14" viewBox="0 0 17 14"><defs><linearGradient id="tg" x1="0" y1="0" x2="0" y2="1"><stop offset="0" stop-color="#B4B4B4"/><stop offset="0.45" stop-color="#D6D8E2"/><stop offset="1" stop-color="#ECECEC"/></linearGradient></defs><path d="M5.5 2.2 Q5.5 0.5 7.2 0.5 L14.6 0.5 Q16.3 0.5 16.3 2.2 L16.3 10.5 L5.5 10.5 Z" fill="url(#tg)" stroke="#A9A9A9" stroke-width="0.8"/><line x1="9" y1="1" x2="9" y2="10" stroke="#77777F" stroke-width="0.9"/><line x1="12.6" y1="1" x2="12.6" y2="10" stroke="#77777F" stroke-width="0.9"/><rect x="0.4" y="2.4" width="5" height="8.3" rx="0.8" fill="#F5B400" stroke="#C98A00" stroke-width="0.7"/><rect x="1" y="4.6" width="2.6" height="3.4" fill="#4B7FD0"/><rect x="0.4" y="10" width="16" height="1.4" fill="#8A8A8A"/><circle cx="3.4" cy="11.3" r="1.45" fill="#E8E8E8" stroke="#2A1A1A" stroke-width="1.0"/><circle cx="13.4" cy="11.3" r="1.45" fill="#E8E8E8" stroke="#2A1A1A" stroke-width="1.0"/></svg>
<div class="a ut" style="left:351.8px;top:566.3px;height:13px;line-height:13px;letter-spacing:-0.18px">Dump 5</div>
<div class="a" style="left:399px;top:560.2px;width:85px;height:21.799999999999955px;background:#F0F0F0;border:1px solid #D9D9D9;border-bottom:none"></div>
<svg class="a" style="left:411.7px;top:562.6px" width="16" height="15" viewBox="0 0 16 15"><path d="M1.2 6.5 Q0.3 2 2.6 0.8 Q4.5 1 5.6 2.4 Q8 1.6 10.4 2.4 Q11.5 1 13.4 0.8 Q15.7 2 14.8 6.5 Q15.6 9.5 13.6 12 Q11.5 14.3 8 14.3 Q4.5 14.3 2.4 12 Q0.4 9.5 1.2 6.5Z" fill="#C98A45" stroke="#8A5A22" stroke-width="0.7"/><path d="M8 3 Q11 3.5 11 7 L5 7 Q5 3.5 8 3Z" fill="#E2B77A"/><ellipse cx="8" cy="10.6" rx="3.9" ry="3" fill="#F8EAD2"/><circle cx="5.2" cy="7" r="1.15" fill="#2A1608"/><circle cx="10.8" cy="7" r="1.15" fill="#2A1608"/><ellipse cx="8" cy="9.6" rx="1.3" ry="0.9" fill="#2A1608"/><path d="M6.6 11.6 Q8 12.8 9.4 11.6" fill="#B03030" stroke="#5A2A10" stroke-width="0.5"/></svg>
<div class="a ut" style="left:431.7px;top:566.3px;height:13px;line-height:13px;letter-spacing:0.26px">Watch 1</div>
<div class="a" style="left:483px;top:560.2px;width:74px;height:21.799999999999955px;background:#F0F0F0;border:1px solid #D9D9D9;border-bottom:none"></div>
<div class="a" style="left:495.7px;top:565.5px;height:13px;line-height:13px;font-size:9px;color:#555;white-space:pre;letter-spacing:-0.3px">[<em style="font-family:'Liberation Serif',serif;font-size:11.5px;color:#7A2020;letter-spacing:-0.2px">x</em><span style="color:#777">=</span>]</div>
<div class="a ut" style="left:515.7px;top:566.3px;height:13px;line-height:13px;letter-spacing:-0.08px">Locals</div>
<div class="a" style="left:556px;top:560.2px;width:72px;height:21.799999999999955px;background:#F0F0F0;border:1px solid #D9D9D9;border-bottom:none"></div>
<svg class="a" style="left:571px;top:562.4px" width="13" height="16" viewBox="0 0 13 16"><path d="M2.6 14.6 L8.2 6.6 Q10.6 3 8.6 1.9 Q6.8 1 4.6 3.6" fill="none" stroke="#B8B0B0" stroke-width="3.2" stroke-linecap="round"/><path d="M2.6 14.6 L8.2 6.6 Q10.6 3 8.6 1.9 Q6.8 1 4.6 3.6" fill="none" stroke="#F6F0F0" stroke-width="2.4" stroke-linecap="round"/><path d="M2.6 14.6 L8.2 6.6 Q10.6 3 8.6 1.9 Q6.8 1 4.6 3.6" fill="none" stroke="#E32626" stroke-width="2.4" stroke-dasharray="1.5 1.8" stroke-linecap="butt"/></svg>
<div class="a ut" style="left:588.5px;top:566.3px;height:13px;line-height:13px;letter-spacing:0.17px">Struct</div>
<div class="a" style="left:2px;top:581.5px;width:1160px;height:1.5px;background:#000000;"></div>
<div class="view" style="left:2px;top:583px;width:1160px;height:212px;border-right:1px solid #828790;border-bottom:1px solid #000"></div>
<div class="a" style="left:2px;top:583px;width:1141px;height:14px;background:#C0C0C0;"></div>
<div class="a" style="left:64px;top:583px;width:1px;height:14px;background:#808080;"></div>
<div class="a" style="left:65px;top:583px;width:1px;height:14px;background:#A0A0A0;"></div>
<div class="a" style="left:401px;top:583px;width:1px;height:14px;background:#808080;"></div>
<div class="a" style="left:402px;top:583px;width:1px;height:14px;background:#A0A0A0;"></div>
<div class="a" style="left:521px;top:583px;width:1px;height:14px;background:#808080;"></div>
<div class="a" style="left:522px;top:583px;width:1px;height:14px;background:#A0A0A0;"></div>
<div class="a" style="left:1142px;top:583px;width:1px;height:14px;background:#808080;"></div>
<div class="a" style="left:1143px;top:583px;width:1px;height:14px;background:#A0A0A0;"></div>
<div class="a" style="left:2px;top:596.4px;width:1141px;height:1.3px;background:#808080;"></div>
<div class="a m h11" style="left:5px;top:585px"><i>A<s>ddress</s></i></div>
<div class="a m h11" style="left:69px;top:585px"><i>H<s>ex</s></i></div>
<div class="a m h11" style="left:406px;top:585px"><i>ASCII</i></div>
<div class="a m" style="left:2px;top:598px;width:1141px;height:196px;overflow:hidden"><div class="a" style="left:63px;top:0;width:21px;height:10.5px;background:#C0C0C0"></div><div class="a" style="left:404px;top:0;width:7px;height:10.5px;background:#C0C0C0"></div><div class="r" style="left:3px;top:0px"><i><u>00</u>CE<u>0000</u></i></div><div class="r" style="left:67px;top:0px"><i><span class="pp">4D</span> <span class="pp">5A</span> 9<u>0</u> <span class="g0"><u>00</u></span> <u>0</u>3 <span class="g0"><u>00</u></span> <span class="g0"><u>00</u></span> <span class="g0"><u>00</u></span> <u>0</u>4 <span class="g0"><u>00</u></span> <span class="g0"><u>00</u></span> <span class="g0"><u>00</u></span> <span class="dr">FF</span> <span class="dr">FF</span> <span class="g0"><u>00</u></span> <span class="g0"><u>00</u></span></i></div><div class="r" style="left:403.5px;top:0px"><i><span class="pp">M</span><span class="pp">Z</span>.<span class="g0">.</span>.<span class="g0">.</span><span class="g0">.</span><span class="g0">.</span>.<span class="g0">.</span><span class="g0">.</span><span class="g0">.</span><span class="dr"><s>ÿ</s></span><span class="dr"><s>ÿ</s></span><span class="g0">.</span><span class="g0">.</span></i></div><div class="r" style="left:3px;top:11px"><i><u>00</u>CE<u>00</u>1<u>0</u></i></div><div class="r" style="left:67px;top:11px"><i>B8 <span class="g0"><u>00</u></span> <span class="g0"><u>00</u></span> <span class="g0"><u>00</u></span> <span class="g0"><u>00</u></span> <span class="g0"><u>00</u></span> <span class="g0"><u>00</u></span> <span class="g0"><u>00</u></span> <span class="pp">4<u>0</u></span> <span class="g0"><u>00</u></span> <span class="g0"><u>00</u></span> <span class="g0"><u>00</u></span> <span class="g0"><u>00</u></span> <span class="g0"><u>00</u></span> <span class="g0"><u>00</u></span> <span class="g0"><u>00</u></span></i></div><div class="r" style="left:403.5px;top:11px"><i>¸<span class="g0">.</span><span class="g0">.</span><span class="g0">.</span><span class="g0">.</span><span class="g0">.</span><span class="g0">.</span><span class="g0">.</span><span class="pp">@</span><span class="g0">.</span><span class="g0">.</span><span class="g0">.</span><span class="g0">.</span><span class="g0">.</span><span class="g0">.</span><span class="g0">.</span></i></div><div class="r" style="left:3px;top:22px"><i><u>00</u>CE<u>00</u>2<u>0</u></i></div><div class="r" style="left:67px;top:22px"><i><span class="g0"><u>00</u></span> <span class="g0"><u>00</u></span> <span class="g0"><u>00</u></span> <span class="g0"><u>00</u></span> <span class="g0"><u>00</u></span> <span class="g0"><u>00</u></span> <span class="g0"><u>00</u></span> <span class="g0"><u>00</u></span> <span class="g0"><u>00</u></span> <span class="g0"><u>00</u></span> <span class="g0"><u>00</u></span> <span class="g0"><u>00</u></span> <span class="g0"><u>00</u></span> <span class="g0"><u>00</u></span> <span class="g0"><u>00</u></span> <span class="g0"><u>00</u></span></i></div><div class="r" style="left:403.5px;top:22px"><i><span class="g0">.</span><span class="g0">.</span><span class="g0">.</span><span class="g0">.</span><span class="g0">.</span><span class="g0">.</span><span class="g0">.</span><span class="g0">.</span><span class="g0">.</span><span class="g0">.</span><span class="g0">.</span><span class="g0">.</span><span class="g0">.</span><span class="g0">.</span><span class="g0">.</span><span class="g0">.</span></i></div><div class="r" style="left:3px;top:33px"><i><u>00</u>CE<u>00</u>3<u>0</u></i></div><div class="r" style="left:67px;top:33px"><i><span class="g0"><u>00</u></span> <span class="g0"><u>00</u></span> <span class="g0"><u>00</u></span> <span class="g0"><u>00</u></span> <span class="g0"><u>00</u></span> <span class="g0"><u>00</u></span> <span class="g0"><u>00</u></span> <span class="g0"><u>00</u></span> <span class="g0"><u>00</u></span> <span class="g0"><u>00</u></span> <span class="g0"><u>00</u></span> <span class="g0"><u>00</u></span> E<u>0</u> <span class="g0"><u>00</u></span> <span class="g0"><u>00</u></span> <span class="g0"><u>00</u></span></i></div><div class="r" style="left:403.5px;top:33px"><i><span class="g0">.</span><span class="g0">.</span><span class="g0">.</span><span class="g0">.</span><span class="g0">.</span><span class="g0">.</span><span class="g0">.</span><span class="g0">.</span><span class="g0">.</span><span class="g0">.</span><span class="g0">.</span><span class="g0">.</span><s>à</s><span class="g0">.</span><span class="g0">.</span><span class="g0">.</span></i></div><div class="r" style="left:3px;top:44px"><i><u>00</u>CE<u>00</u>4<u>0</u></i></div><div class="r" style="left:67px;top:44px"><i><u>0</u>E 1F BA <u>0</u>E <span class="g0"><u>00</u></span> B4 <span class="pp"><u>0</u>9</span> CD <span class="pp">21</span> B8 <u>0</u>1 <span class="pp">4C</span> CD <span class="pp">21</span> <span class="pp">54</span> <span class="pp">68</span></i></div><div class="r" style="left:403.5px;top:44px"><i>..º.<span class="g0">.</span>´<span class="pp">.</span>Í<span class="pp">!</span>¸.<span class="pp">L</span>Í<span class="pp">!</span><span class="pp">T</span><span class="pp"><s>h</s></span></i></div><div class="r" style="left:3px;top:55px"><i><u>00</u>CE<u>00</u>5<u>0</u></i></div><div class="r" style="left:67px;top:55px"><i><span class="pp">69</span> <span class="pp">73</span> <span class="pp">2<u>0</u></span> <span class="pp">7<u>0</u></span> <span class="pp">72</span> <span class="pp">6F</span> <span class="pp">67</span> <span class="pp">72</span> <span class="pp">61</span> <span class="pp">6D</span> <span class="pp">2<u>0</u></span> <span class="pp">63</span> <span class="pp">61</span> <span class="pp">6E</span> <span class="pp">6E</span> <span class="pp">6F</span></i></div><div class="r" style="left:403.5px;top:55px"><i><span class="pp"><s>i</s></span><span class="pp"><s>s</s></span><span class="pp"> </span><span class="pp"><s>p</s></span><span class="pp"><s>r</s></span><span class="pp"><s>o</s></span><span class="pp"><s>g</s></span><span class="pp"><s>r</s></span><span class="pp"><s>a</s></span><span class="pp"><s>m</s></span><span class="pp"> </span><span class="pp"><s>c</s></span><span class="pp"><s>a</s></span><span class="pp"><s>n</s></span><span class="pp"><s>n</s></span><span class="pp"><s>o</s></span></i></div><div class="r" style="left:3px;top:66px"><i><u>00</u>CE<u>00</u>6<u>0</u></i></div><div class="r" style="left:67px;top:66px"><i><span class="pp">74</span> <span class="pp">2<u>0</u></span> <span class="pp">62</span> <span class="pp">65</span> <span class="pp">2<u>0</u></span> <span class="pp">72</span> <span class="pp">75</span> <span class="pp">6E</span> <span class="pp">2<u>0</u></span> <span class="pp">69</span> <span class="pp">6E</span> <span class="pp">2<u>0</u></span> <span class="pp">44</span> <span class="pp">4F</span> <span class="pp">53</span> <span class="pp">2<u>0</u></span></i></div><div class="r" style="left:403.5px;top:66px"><i><span class="pp"><s>t</s></span><span class="pp"> </span><span class="pp"><s>b</s></span><span class="pp"><s>e</s></span><span class="pp"> </span><span class="pp"><s>r</s></span><span class="pp"><s>u</s></span><span class="pp"><s>n</s></span><span class="pp"> </span><span class="pp"><s>i</s></span><span class="pp"><s>n</s></span><span class="pp"> </span><span class="pp">D</span><span class="pp">O</span><span class="pp">S</span><span class="pp"> </span></i></div><div class="r" style="left:3px;top:77px"><i><u>00</u>CE<u>00</u>7<u>0</u></i></div><div class="r" style="left:67px;top:77px"><i><span class="pp">6D</span> <span class="pp">6F</span> <span class="pp">64</span> <span class="pp">65</span> <span class="pp">2E</span> <span class="pp"><u>0</u>D</span> <span class="pp"><u>0</u>D</span> <span class="pp"><u>0</u>A</span> <span class="pp">24</span> <span class="g0"><u>00</u></span> <span class="g0"><u>00</u></span> <span class="g0"><u>00</u></span> <span class="g0"><u>00</u></span> <span class="g0"><u>00</u></span> <span class="g0"><u>00</u></span> <span class="g0"><u>00</u></span></i></div><div class="r" style="left:403.5px;top:77px"><i><span class="pp"><s>m</s></span><span class="pp"><s>o</s></span><span class="pp"><s>d</s></span><span class="pp"><s>e</s></span><span class="pp">.</span><span class="pp">.</span><span class="pp">.</span><span class="pp">.</span><span class="pp">$</span><span class="g0">.</span><span class="g0">.</span><span class="g0">.</span><span class="g0">.</span><span class="g0">.</span><span class="g0">.</span><span class="g0">.</span></i></div><div class="r" style="left:3px;top:88px"><i><u>00</u>CE<u>00</u>8<u>0</u></i></div><div class="r" style="left:67px;top:88px"><i>A3 DF DD <span class="pp">6<u>0</u></span> E7 BE B3 <span class="pp">33</span> E7 BE B3 <span class="pp">33</span> E7 BE B3 <span class="pp">33</span></i></div><div class="r" style="left:403.5px;top:88px"><i>£ßÝ<span class="pp">`</span><s>ç</s>¾³<span class="pp">3</span><s>ç</s>¾³<span class="pp">3</span><s>ç</s>¾³<span class="pp">3</span></i></div><div class="r" style="left:3px;top:99px"><i><u>00</u>CE<u>00</u>9<u>0</u></i></div><div class="r" style="left:67px;top:99px"><i><span class="pp">2C</span> D1 B7 <span class="pp">32</span> E2 BE B3 <span class="pp">33</span> <span class="pp">2C</span> D1 B<u>0</u> <span class="pp">32</span> E6 BE B3 <span class="pp">33</span></i></div><div class="r" style="left:403.5px;top:99px"><i><span class="pp">,</span>Ñ·<span class="pp">2</span><s>â</s>¾³<span class="pp">3</span><span class="pp">,</span>Ñ°<span class="pp">2</span><s>æ</s>¾³<span class="pp">3</span></i></div><div class="r" style="left:3px;top:110px"><i><u>00</u>CE<u>00</u>A<u>0</u></i></div><div class="r" style="left:67px;top:110px"><i>BC D6 B2 <span class="pp">32</span> E<u>0</u> BE B3 <span class="pp">33</span> E7 BE B2 <span class="pp">33</span> F2 BE B3 <span class="pp">33</span></i></div><div class="r" style="left:403.5px;top:110px"><i>¼Ö²<span class="pp">2</span><s>à</s>¾³<span class="pp">3</span><s>ç</s>¾²<span class="pp">3</span><s>ò</s>¾³<span class="pp">3</span></i></div><div class="r" style="left:3px;top:121px"><i><u>00</u>CE<u>00</u>B<u>0</u></i></div><div class="r" style="left:67px;top:121px"><i><span class="pp">61</span> CE B6 <span class="pp">32</span> E5 BE B3 <span class="pp">33</span> <span class="pp">61</span> CE B3 <span class="pp">32</span> E6 BE B3 <span class="pp">33</span></i></div><div class="r" style="left:403.5px;top:121px"><i><span class="pp"><s>a</s></span>Î¶<span class="pp">2</span><s>å</s>¾³<span class="pp">3</span><span class="pp"><s>a</s></span>Î³<span class="pp">2</span><s>æ</s>¾³<span class="pp">3</span></i></div><div class="r" style="left:3px;top:132px"><i><u>00</u>CE<u>00</u>C<u>0</u></i></div><div class="r" style="left:67px;top:132px"><i><span class="pp">61</span> CE B1 <span class="pp">32</span> E6 BE B3 <span class="pp">33</span> <span class="pp">52</span> <span class="pp">69</span> <span class="pp">63</span> <span class="pp">68</span> E7 BE B3 <span class="pp">33</span></i></div><div class="r" style="left:403.5px;top:132px"><i><span class="pp"><s>a</s></span>Î±<span class="pp">2</span><s>æ</s>¾³<span class="pp">3</span><span class="pp">R</span><span class="pp"><s>i</s></span><span class="pp"><s>c</s></span><span class="pp"><s>h</s></span><s>ç</s>¾³<span class="pp">3</span></i></div><div class="r" style="left:3px;top:143px"><i><u>00</u>CE<u>00</u>D<u>0</u></i></div><div class="r" style="left:67px;top:143px"><i><span class="g0"><u>00</u></span> <span class="g0"><u>00</u></span> <span class="g0"><u>00</u></span> <span class="g0"><u>00</u></span> <span class="g0"><u>00</u></span> <span class="g0"><u>00</u></span> <span class="g0"><u>00</u></span> <span class="g0"><u>00</u></span> <span class="g0"><u>00</u></span> <span class="g0"><u>00</u></span> <span class="g0"><u>00</u></span> <span class="g0"><u>00</u></span> <span class="g0"><u>00</u></span> <span class="g0"><u>00</u></span> <span class="g0"><u>00</u></span> <span class="g0"><u>00</u></span></i></div><div class="r" style="left:403.5px;top:143px"><i><span class="g0">.</span><span class="g0">.</span><span class="g0">.</span><span class="g0">.</span><span class="g0">.</span><span class="g0">.</span><span class="g0">.</span><span class="g0">.</span><span class="g0">.</span><span class="g0">.</span><span class="g0">.</span><span class="g0">.</span><span class="g0">.</span><span class="g0">.</span><span class="g0">.</span><span class="g0">.</span></i></div><div class="r" style="left:3px;top:154px"><i><u>00</u>CE<u>00</u>E<u>0</u></i></div><div class="r" style="left:67px;top:154px"><i><span class="pp">5<u>0</u></span> <span class="pp">45</span> <span class="g0"><u>00</u></span> <span class="g0"><u>00</u></span> <span class="pp">4C</span> <u>0</u>1 <u>0</u>4 <span class="g0"><u>00</u></span> <span class="pp">5A</span> <span class="pp">76</span> B9 <span class="pp">5E</span> <span class="g0"><u>00</u></span> <span class="g0"><u>00</u></span> <span class="g0"><u>00</u></span> <span class="g0"><u>00</u></span></i></div><div class="r" style="left:403.5px;top:154px"><i><span class="pp">P</span><span class="pp">E</span><span class="g0">.</span><span class="g0">.</span><span class="pp">L</span>..<span class="g0">.</span><span class="pp">Z</span><span class="pp"><s>v</s></span>¹<span class="pp">^</span><span class="g0">.</span><span class="g0">.</span><span class="g0">.</span><span class="g0">.</span></i></div><div class="r" style="left:3px;top:165px"><i><u>00</u>CE<u>00</u>F<u>0</u></i></div><div class="r" style="left:67px;top:165px"><i><span class="g0"><u>00</u></span> <span class="g0"><u>00</u></span> <span class="g0"><u>00</u></span> <span class="g0"><u>00</u></span> E<u>0</u> <span class="g0"><u>00</u></span> <u>0</u>2 <span class="pp">21</span> <span class="pp"><u>0</u>B</span> <u>0</u>1 <u>0</u>E 1A <span class="g0"><u>00</u></span> <span class="pp"><u>0</u>C</span> <span class="g0"><u>00</u></span> <span class="g0"><u>00</u></span></i></div><div class="r" style="left:403.5px;top:165px"><i><span class="g0">.</span><span class="g0">.</span><span class="g0">.</span><span class="g0">.</span><s>à</s><span class="g0">.</span>.<span class="pp">!</span><span class="pp">.</span>...<span class="g0">.</span><span class="pp">.</span><span class="g0">.</span><span class="g0">.</span></i></div><div class="r" style="left:3px;top:176px"><i><u>00</u>CE<u>0</u>1<u>00</u></i></div><div class="r" style="left:67px;top:176px"><i><span class="g0"><u>00</u></span> <span class="pp"><u>0</u>C</span> <span class="g0"><u>00</u></span> <span class="g0"><u>00</u></span> <span class="g0"><u>00</u></span> <span class="g0"><u>00</u></span> <span class="g0"><u>00</u></span> <span class="g0"><u>00</u></span> 1<u>0</u> 1<u>0</u> <span class="g0"><u>00</u></span> <span class="g0"><u>00</u></span> <span class="g0"><u>00</u></span> 1<u>0</u> <span class="g0"><u>00</u></span> <span class="g0"><u>00</u></span></i></div><div class="r" style="left:403.5px;top:176px"><i><span class="g0">.</span><span class="pp">.</span><span class="g0">.</span><span class="g0">.</span><span class="g0">.</span><span class="g0">.</span><span class="g0">.</span><span class="g0">.</span>..<span class="g0">.</span><span class="g0">.</span><span class="g0">.</span>.<span class="g0">.</span><span class="g0">.</span></i></div><div class="r" style="left:3px;top:187px"><i><u>00</u>CE<u>0</u>11<u>0</u></i></div><div class="r" style="left:67px;top:187px"><i><span class="g0"><u>00</u></span> <span class="pp">2<u>0</u></span> <span class="g0"><u>00</u></span> <span class="g0"><u>00</u></span> <span class="g0"><u>00</u></span> <span class="g0"><u>00</u></span> <span class="g0"><u>00</u></span> 1<u>0</u> <span class="g0"><u>00</u></span> 1<u>0</u> <span class="g0"><u>00</u></span> <span class="g0"><u>00</u></span> <span class="g0"><u>00</u></span> <u>0</u>2 <span class="g0"><u>00</u></span> <span class="g0"><u>00</u></span></i></div><div class="r" style="left:403.5px;top:187px"><i><span class="g0">.</span><span class="pp"> </span><span class="g0">.</span><span class="g0">.</span><span class="g0">.</span><span class="g0">.</span><span class="g0">.</span>.<span class="g0">.</span>.<span class="g0">.</span><span class="g0">.</span><span class="g0">.</span>.<span class="g0">.</span><span class="g0">.</span></i></div></div>
<div class="a" style="left:64px;top:597px;width:1px;height:197px;background:#808080;"></div>
<div class="a" style="left:149px;top:597px;width:1px;height:197px;background:#808080;"></div>
<div class="a" style="left:233px;top:597px;width:1px;height:197px;background:#808080;"></div>
<div class="a" style="left:317px;top:597px;width:1px;height:197px;background:#808080;"></div>
<div class="a" style="left:401px;top:597px;width:1px;height:197px;background:#808080;"></div>
<div class="a" style="left:521px;top:597px;width:1px;height:197px;background:#808080;"></div>
<div class="a" style="left:1144px;top:583px;width:17px;height:211px;background:#F0F0F0;"></div>
<div class="a" style="left:1145px;top:600px;width:15px;height:49.5px;background:#CDCDCD;"></div>
<div class="a" style="left:1161px;top:582px;width:1.5px;height:213px;background:#000000;"></div>
<div class="view" style="left:1164px;top:557px;width:751px;height:238px;border-top:1px solid #A0A0A0"></div>
<div class="a" style="left:1231px;top:559px;width:671px;height:11px;background:#C0C0C0;"></div>
<div class="a" style="left:1164px;top:559px;width:63px;height:11px;background:#000000;"></div>
<div class="a m" style="left:1164px;top:559px;width:738px;height:218px;overflow:hidden"><div class="r " style="left:4.5px;top:0px;color:#FFFFFF"><i><u>00</u>C5F<u>0</u>98</i></div><div class="r" style="left:71px;top:0px"><i>1<u>00</u>1A513</i></div><div class="r rd" style="left:133.5px;top:0px"><i><s>return</s> <s>to</s> <s>stage</s>2-<s>unpacked</s>.1<u>00</u>1A513 <s>from</s> ???</i></div><div class="r gr" style="left:4.5px;top:11px;"><i><u>00</u>C5F<u>0</u>9C</i></div><div class="r" style="left:71px;top:11px"><i><u>00000000</u></i></div><div class="r gr" style="left:4.5px;top:22px;"><i><u>00</u>C5F<u>0</u>A<u>0</u></i></div><div class="r" style="left:71px;top:22px"><i><u>0000</u>5<u>000</u></i></div><div class="r gr" style="left:4.5px;top:33px;"><i><u>00</u>C5F<u>0</u>A4</i></div><div class="r" style="left:71px;top:33px"><i><u>0000</u>3<u>000</u></i></div><div class="r gr" style="left:4.5px;top:44px;"><i><u>00</u>C5F<u>0</u>A8</i></div><div class="r" style="left:71px;top:44px"><i><u>0000000</u>4</i></div><div class="r gr" style="left:4.5px;top:55px;"><i><u>00</u>C5F<u>0</u>AC</i></div><div class="r" style="left:71px;top:55px"><i><u>00</u>CD<u>0</u>564</i></div><div class="r gr" style="left:4.5px;top:66px;"><i><u>00</u>C5F<u>0</u>B<u>0</u></i></div><div class="r" style="left:71px;top:66px"><i><u>00</u>CD<u>0</u>4F4</i></div><div class="r gr" style="left:4.5px;top:77px;"><i><u>00</u>C5F<u>0</u>B4</i></div><div class="r" style="left:71px;top:77px"><i><u>00</u>CD<u>0</u>5C8</i></div><div class="r gr" style="left:4.5px;top:88px;"><i><u>00</u>C5F<u>0</u>B8</i></div><div class="r" style="left:71px;top:88px"><i><u>00</u>CE<u>00</u>E<u>0</u></i></div><div class="r gr" style="left:4.5px;top:99px;"><i><u>00</u>C5F<u>0</u>BC</i></div><div class="r" style="left:71px;top:99px"><i><u>0</u>135E538</i></div><div class="r gr" style="left:4.5px;top:110px;"><i><u>00</u>C5F<u>0</u>C<u>0</u></i></div><div class="r" style="left:71px;top:110px"><i><u>00</u>CD<u>0</u>91C</i></div><div class="r gr" style="left:4.5px;top:121px;"><i><u>00</u>C5F<u>0</u>C4</i></div><div class="r" style="left:71px;top:121px"><i><u>00</u>CD<u>0</u>25C</i></div><div class="r gr" style="left:4.5px;top:132px;"><i><u>00</u>C5F<u>0</u>C8</i></div><div class="r" style="left:71px;top:132px"><i><u>00</u>CE<u>00</u>F8</i></div><div class="r gr" style="left:4.5px;top:143px;"><i><u>00</u>C5F<u>0</u>CC</i></div><div class="r" style="left:71px;top:143px"><i>1<u>000</u>18AA</i></div><div class="r rd" style="left:133.5px;top:143px"><i><s>return</s> <s>to</s> <s>stage</s>2-<s>unpacked</s>.1<u>000</u>18AA <s>from</s> <s>stage</s>2-<s>unpacked</s>.1<u>000</u>192D</i></div><div class="r gr" style="left:4.5px;top:154px;"><i><u>00</u>C5F<u>0</u>D<u>0</u></i></div><div class="r" style="left:71px;top:154px"><i><u>00</u>CD<u>0</u>C1<u>0</u></i></div><div class="r gr" style="left:4.5px;top:165px;"><i><u>00</u>C5F<u>0</u>D4</i></div><div class="r" style="left:71px;top:165px"><i><u>0</u>13574FF</i></div><div class="r " style="left:133.5px;top:165px"><i>&quot;<s>ly</s> 25 M<s>odel</s> 8<u>0</u> S<s>tepping</s> <u>0</u>, A<s>uthentic</s>AMD&quot;</i></div><div class="r gr" style="left:4.5px;top:176px;"><i><u>00</u>C5F<u>0</u>D8</i></div><div class="r" style="left:71px;top:176px"><i><u>0</u>135E54C</i></div><div class="r gr" style="left:4.5px;top:187px;"><i><u>00</u>C5F<u>0</u>DC</i></div><div class="r" style="left:71px;top:187px"><i><u>0</u>135E55<u>0</u></i></div><div class="r " style="left:133.5px;top:187px"><i>&amp;&quot;.<s>text</s>&quot;</i></div><div class="r gr" style="left:4.5px;top:198px;"><i><u>00</u>C5F<u>0</u>E<u>0</u></i></div><div class="r" style="left:71px;top:198px"><i><u>00</u>CD<u>0</u>638</i></div><div class="r gr" style="left:4.5px;top:209px;"><i><u>00</u>C5F<u>0</u>E4</i></div><div class="r" style="left:71px;top:209px"><i><u>00</u>CD<u>0</u>978</i></div></div>
<div class="a" style="left:1227px;top:558px;width:1px;height:219px;background:#A0A0A0;"></div>
<div class="a" style="left:1163px;top:558px;width:1px;height:237px;background:#A0A0A0;"></div>
<div class="a" style="left:1229px;top:558px;width:2px;height:219px;background:#000000;"></div>
<div class="a" style="left:1293px;top:558px;width:1px;height:219px;background:#808080;"></div>
<div class="a" style="left:1903px;top:558px;width:11px;height:219px;background:#F0F0F0;"></div>
<div class="a" style="left:1904px;top:716px;width:10px;height:18px;background:#CDCDCD;"></div>
<div class="a" style="left:1164px;top:777px;width:750px;height:17px;background:#F0F0F0;"></div>
<div class="a" style="left:1181px;top:778px;width:224px;height:15px;background:#CDCDCD;"></div>
<div class="a" style="left:1162px;top:794px;width:752px;height:2px;background:#828790;"></div>
<div class="a" style="left:1162px;top:557px;width:2px;height:238px;background:#F0F0F0;"></div>
<div class="a" style="left:0px;top:796px;width:1914px;height:20px;background:#F0F0F0;"></div>
<div class="a" style="left:2px;top:800.7px;line-height:14px;font-size:10.5px;white-space:pre"><span class="ut uq" style="letter-spacing:-0.29px">Command:</span></div>
<div class="a" style="left:56px;top:797px;width:1789px;height:20px;background:#FFFFFF;border:1px solid #7A7A7A;border-top-color:#828790"></div>
<div class="a" style="left:59px;top:802px;line-height:12px;font-family:'Liberation Mono',monospace;font-size:11.66px;white-space:pre">bp VirtualProtect</div>
<div class="a" style="left:1845px;top:797px;width:70px;height:20px;background:#E1E1E1;border:1px solid #ADADAD;line-height:18px;padding-left:2px;font-size:10.5px"><span class="ut uq" style="letter-spacing:0.2px">Default</span></div>
<svg class="a" style="left:0;top:0;pointer-events:none" width="1914" height="816" viewBox="0 0 1914 816"><polyline points="292.0,163.75 294.5,166.25 297.0,163.75" fill="none" stroke="#FF0000" stroke-width="1"/><polyline points="292.0,185.75 294.5,188.25 297.0,185.75" fill="none" stroke="#FF0000" stroke-width="1"/><polyline points="292.0,339.75 294.5,342.25 297.0,339.75" fill="none" stroke="#FF0000" stroke-width="1"/><polyline points="292.0,429.25 294.5,426.75 297.0,429.25" fill="none" stroke="#FF0000" stroke-width="1"/><circle cx="201.5" cy="10.5" r="3.0" fill="#808080"/><circle cx="201.5" cy="21.5" r="3.0" fill="#808080"/><circle cx="201.5" cy="32.5" r="3.0" fill="#808080"/><circle cx="201.5" cy="43.5" r="3.0" fill="#808080"/><circle cx="201.5" cy="54.5" r="3.0" fill="#808080"/><circle cx="201.5" cy="65.5" r="3.0" fill="#808080"/><circle cx="201.5" cy="76.5" r="3.0" fill="#808080"/><circle cx="201.5" cy="87.5" r="3.0" fill="#808080"/><circle cx="201.5" cy="98.5" r="3.0" fill="#808080"/><circle cx="201.5" cy="109.5" r="3.0" fill="#808080"/><circle cx="201.5" cy="120.5" r="3.0" fill="#808080"/><circle cx="201.5" cy="131.5" r="3.0" fill="#808080"/><circle cx="201.5" cy="142.5" r="3.0" fill="#808080"/><circle cx="201.5" cy="153.5" r="3.0" fill="#808080"/><circle cx="201.5" cy="164.5" r="3.0" fill="#808080"/><circle cx="201.5" cy="175.5" r="3.0" fill="#808080"/><circle cx="201.5" cy="186.5" r="3.0" fill="#808080"/><circle cx="201.5" cy="197.5" r="3.0" fill="#808080"/><circle cx="201.5" cy="208.5" r="3.0" fill="#808080"/><circle cx="201.5" cy="219.5" r="3.0" fill="#808080"/><circle cx="201.5" cy="230.5" r="3.0" fill="#808080"/><circle cx="201.5" cy="241.5" r="3.0" fill="#808080"/><circle cx="201.5" cy="252.5" r="3.0" fill="#808080"/><circle cx="201.5" cy="263.5" r="3.0" fill="#808080"/><circle cx="201.5" cy="274.5" r="3.0" fill="#808080"/><circle cx="201.5" cy="285.5" r="3.0" fill="#808080"/><circle cx="201.5" cy="296.5" r="3.0" fill="#808080"/><circle cx="201.5" cy="307.5" r="3.0" fill="#808080"/><circle cx="201.5" cy="318.5" r="3.0" fill="#808080"/><circle cx="201.5" cy="329.5" r="3.0" fill="#808080"/><circle cx="201.5" cy="340.5" r="3.0" fill="#808080"/><circle cx="201.5" cy="351.5" r="3.0" fill="#808080"/><circle cx="201.5" cy="362.5" r="3.0" fill="#808080"/><circle cx="201.5" cy="373.5" r="3.0" fill="#808080"/><circle cx="201.5" cy="384.5" r="3.0" fill="#808080"/><circle cx="201.5" cy="395.5" r="3.15" fill="#FF0000"/><circle cx="201.5" cy="406.5" r="3.0" fill="#808080"/><circle cx="201.5" cy="417.5" r="3.0" fill="#808080"/><circle cx="201.5" cy="428.5" r="3.0" fill="#808080"/><circle cx="201.5" cy="439.5" r="3.0" fill="#808080"/><circle cx="201.5" cy="450.5" r="3.0" fill="#808080"/><circle cx="201.5" cy="461.5" r="3.0" fill="#808080"/><circle cx="201.5" cy="472.5" r="3.0" fill="#808080"/><circle cx="201.5" cy="483.5" r="3.0" fill="#808080"/><polyline points="197,164.5 171.5,164.5 171.5,197.5 196,197.5" fill="none" stroke="#00B4FF" stroke-width="1" stroke-dasharray="4 2"/><polyline points="193.5,194.5 196.5,197.5 193.5,200.5" fill="none" stroke="#00B4FF" stroke-width="1"/><polyline points="197,186.5 149.5,186.5 149.5,503" fill="none" stroke="#00B4FF" stroke-width="1" stroke-dasharray="4 2"/><polyline points="146.5,500 149.5,503.5 152.5,500" fill="none" stroke="#00B4FF" stroke-width="1"/><polyline points="197,340.5 171.5,340.5 171.5,406.5 196,406.5" fill="none" stroke="#00B4FF" stroke-width="1" stroke-dasharray="4 2"/><polyline points="193.5,403.5 196.5,406.5 193.5,409.5" fill="none" stroke="#00B4FF" stroke-width="1"/><polyline points="198,428.5 160.5,428.5 160.5,362.5 196,362.5" fill="none" stroke="#FFA500" stroke-width="1"/><polyline points="193.5,359.5 196.5,362.5 193.5,365.5" fill="none" stroke="#FFA500" stroke-width="1"/><line x1="23" y1="395" x2="195.5" y2="395" stroke="#2B2BFF" stroke-width="2.2"/><polyline points="191.7,390.7 196.2,395 191.7,399.3" fill="none" stroke="#2B2BFF" stroke-width="2.2"/><polyline points="1535.0,15.25 1538.5,11.75 1542.0,15.25" fill="none" stroke="#606060" stroke-width="2"/><polyline points="1535.0,478.75 1538.5,482.25 1542.0,478.75" fill="none" stroke="#606060" stroke-width="2"/><polyline points="221.25,493.0 217.75,496.5 221.25,500.0" fill="none" stroke="#606060" stroke-width="2"/><polyline points="1520.75,493.0 1524.25,496.5 1520.75,500.0" fill="none" stroke="#606060" stroke-width="2"/><polyline points="1908.0,37.75 1911.5,34.25 1915.0,37.75" fill="none" stroke="#606060" stroke-width="2"/><polyline points="1908.0,408.75 1911.5,412.25 1915.0,408.75" fill="none" stroke="#606060" stroke-width="2"/><polyline points="1559.25,423.0 1555.75,426.5 1559.25,430.0" fill="none" stroke="#606060" stroke-width="2"/><polyline points="1893.75,423.0 1897.25,426.5 1893.75,430.0" fill="none" stroke="#606060" stroke-width="2"/><polygon points="1799.5,444.5 1807.5,444.5 1803.5,448.5" fill="#000"/><polygon points="1839,444 1845,444 1842,441" fill="#000"/><polygon points="1839,448 1845,448 1842,451" fill="#000"/><polyline points="1908.0,467.75 1911.5,464.25 1915.0,467.75" fill="none" stroke="#BFBFBF" stroke-width="2"/><polyline points="1908.0,546.25 1911.5,549.75 1915.0,546.25" fill="none" stroke="#BFBFBF" stroke-width="2"/><polyline points="1149.0,593.75 1152.5,590.25 1156.0,593.75" fill="none" stroke="#606060" stroke-width="2"/><polyline points="1149.0,784.25 1152.5,787.75 1156.0,784.25" fill="none" stroke="#606060" stroke-width="2"/><polyline points="1908.0,568.75 1911.5,565.25 1915.0,568.75" fill="none" stroke="#606060" stroke-width="2"/><polyline points="1908.0,766.75 1911.5,770.25 1915.0,766.75" fill="none" stroke="#606060" stroke-width="2"/><polyline points="1174.25,782.0 1170.75,785.5 1174.25,789.0" fill="none" stroke="#606060" stroke-width="2"/><polyline points="1891.75,782.0 1895.25,785.5 1891.75,789.0" fill="none" stroke="#606060" stroke-width="2"/><polygon points="1904.5,805.5 1912.5,805.5 1908.5,809.5" fill="#000"/><rect x="0.5" y="539.9" width="823.5" height="262" fill="none" stroke="#FF2A00" stroke-width="3.1"/></svg>
</div></body></html>
